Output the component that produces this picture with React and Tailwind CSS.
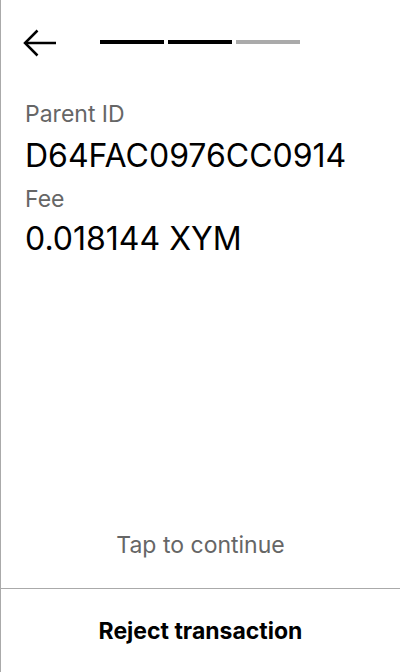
import React from 'react'

const STEPS = [true, true, false]

export default function App() {
  return (
    <div className="h-[672px] w-[400px] flex flex-col bg-white border-l border-[#aaaaaa] text-black" style={{ fontFamily: 'Inter, "Noto Sans", sans-serif' }}>
      {/* Header */}
      <div className="flex items-start pl-[22px] pt-[29px]">
        <svg width="33" height="28" viewBox="0 0 33 28" fill="none" stroke="black" strokeWidth="2.5" className="overflow-visible">
          <path d="M33 14H2" />
          <path d="M14.5 1.5L2 14L14.5 26.5" />
        </svg>
        <div className="flex gap-1 ml-[44px] mt-[11px]">
          {STEPS.map((done, i) => (
            <div key={i} className={`w-16 h-1 ${done ? 'bg-black' : 'bg-[#aaaaaa]'}`} />
          ))}
        </div>
      </div>

      {/* Details */}
      <div className="px-6 pt-[43px] flex flex-col">
        <span className="text-[23px] leading-[28px] text-[#666666]">Parent ID</span>
        <span className="text-[32px] leading-[40px] mt-2">D64FAC0976CC0914</span>
        <span className="text-[23px] leading-[28px] text-[#666666] mt-[9px]">Fee</span>
        <span className="text-[32px] leading-[40px] mt-[6px]">0.018144 XYM</span>
      </div>

      <div className="flex-1" />

      <div className="text-center text-[23px] leading-[28px] text-[#666666] mb-[29px]">Tap to continue</div>

      <button className="h-[84px] border-t border-[#aaaaaa] text-[23px] leading-[28px] font-bold text-black">
        Reject transaction
      </button>
    </div>
  )
}
